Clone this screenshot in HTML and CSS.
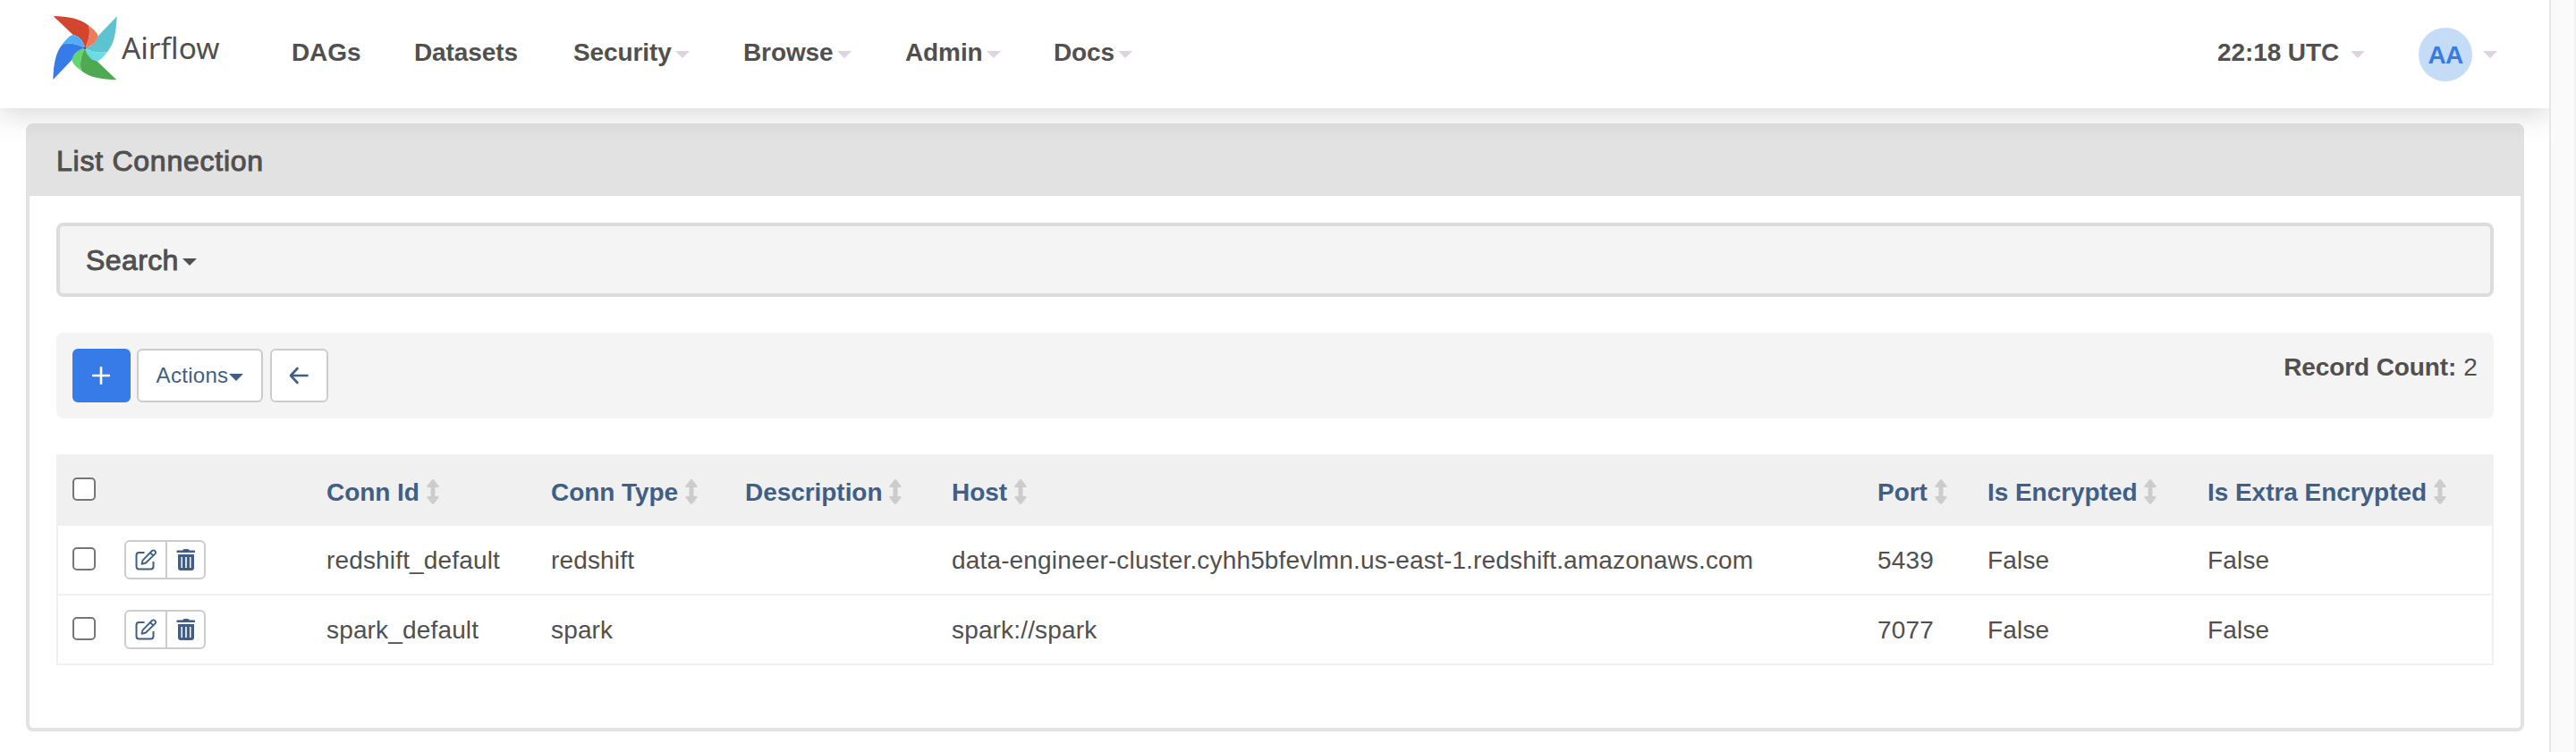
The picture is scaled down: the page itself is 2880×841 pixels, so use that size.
FILE: index.html
```
<!DOCTYPE html>
<html lang="en">
<head>
<meta charset="utf-8">
<title>List Connection - Airflow</title>
<link rel="stylesheet" href="styles.css">
</head>
<body>
<svg class="defs" aria-hidden="true">
  <symbol id="edit" viewBox="0 0 24 24"><path d="M10.500 4H4.500A3 3 0 0 0 1.500 7V19.500A3 3 0 0 0 4.500 22.500H17.500A3 3 0 0 0 20.500 19.500V14" fill="none" stroke="currentColor" stroke-width="2"/><path d="M7.500 16.800L8.600 12.600L19 2Q20.500.700 22.200 2.100Q23.800 3.800 22.400 5.400L12 15.500ZM17 4.200L20.300 7.500" fill="none" stroke="currentColor" stroke-width="1.900" stroke-linejoin="round"/></symbol>
  <symbol id="trash" viewBox="0 0 22 24"><path fill="currentColor" fill-rule="evenodd" d="M1 1.500H7Q8 0 9 0H13Q14 0 15 1.500H20.500Q21 1.500 21 2.500V4H.500V2.500Q.500 1.500 1 1.500ZM2 6H20V21Q20 24 17 24H5Q2 24 2 21ZM5.500 9V21H7V9ZM10.200 9V21H11.800V9ZM15 9V21H16.500V9Z"/></symbol>
  <symbol id="sort" viewBox="0 0 14 28"><path fill="currentColor" d="M7 0Q7.700 0 8.300.700L13.500 7.500Q14 9 12.500 9H9.500V19H12.500Q14 19 13.500 20.500L8.300 27.300Q7 28.700 5.700 27.300L.500 20.500Q0 19 1.500 19H4.500V9H1.500Q0 9 .500 7.500L5.700.700Q6.300 0 7 0Z"/></symbol>
</svg>
<div class="page">
  <header class="navbar">
    <svg class="logo" viewBox="0 0 720 360" role="img" aria-label="Airflow">
      <g><path fill="#d2462f" d="M59 54C110 56 150 62 178 86C183 115 178 137 165 161C160 140 148 122 125 117Z"/><path fill="#ef7b5f" d="M178 86C194 97 209 112 209 122C204 144 186 156 165 161C178 137 183 115 178 86Z"/></g>
      <g transform="rotate(90 165 161)"><path fill="#5cc4d1" d="M59 54C110 56 150 62 178 86C183 115 178 137 165 161C160 140 148 122 125 117Z"/><path fill="#68dde9" d="M178 86C194 97 209 112 209 122C204 144 186 156 165 161C178 137 183 115 178 86Z"/></g>
      <g transform="rotate(180 165 161)"><path fill="#4ea952" d="M59 54C110 56 150 62 178 86C183 115 178 137 165 161C160 140 148 122 125 117Z"/><path fill="#62d56c" d="M178 86C194 97 209 112 209 122C204 144 186 156 165 161C178 137 183 115 178 86Z"/></g>
      <g transform="rotate(270 165 161)"><path fill="#377be8" d="M59 54C110 56 150 62 178 86C183 115 178 137 165 161C160 140 148 122 125 117Z"/><path fill="#51aefa" d="M178 86C194 97 209 112 209 122C204 144 186 156 165 161C178 137 183 115 178 86Z"/></g>
      <circle cx="165" cy="161" r="4" fill="#51504f"/>
      <text class="wordmark" x="288" y="198" textLength="328" lengthAdjust="spacingAndGlyphs">Airflow</text>
    </svg>
    <nav class="menu">
      <a class="item dags">DAGs</a>
      <a class="item datasets">Datasets</a>
      <a class="item security">Security<i class="caret"></i></a>
      <a class="item browse">Browse<i class="caret"></i></a>
      <a class="item admin">Admin<i class="caret"></i></a>
      <a class="item docs">Docs<i class="caret"></i></a>
    </nav>
    <div class="user-menu">
      <a class="item clock">22:18 UTC<i class="caret"></i></a>
      <a class="item account"><span class="avatar">AA</span><i class="caret"></i></a>
    </div>
  </header>
  <main class="panel">
    <h1 class="panel-heading">List Connection</h1>
    <div class="panel-body">
      <div class="search">Search<i class="caret"></i></div>
      <div class="toolbar">
        <button class="btn primary"><svg width="20" height="20" viewBox="0 0 20 20"><path d="M10 1V19M1 10H19" stroke="#fff" stroke-width="2.600" stroke-linecap="round"/></svg></button>
        <button class="btn actions">Actions<i class="caret"></i></button>
        <button class="btn back"><svg width="22" height="20" viewBox="0 0 22 20"><path d="M9.500 2L2 10L9.500 18M2.500 10H20.500" fill="none" stroke="currentColor" stroke-width="2.600" stroke-linecap="round" stroke-linejoin="round"/></svg></button>
        <div class="count"><b>Record Count:</b> 2</div>
      </div>
      <table class="list">
        <colgroup><col class="c-check"><col class="c-tools"><col class="c-id"><col class="c-type"><col class="c-desc"><col class="c-host"><col class="c-port"><col class="c-enc"><col class="c-extra"></colgroup>
        <thead><tr>
          <th><span class="check"></span></th><th></th>
          <th>Conn Id<svg class="sort"><use href="#sort"/></svg></th>
          <th>Conn Type<svg class="sort"><use href="#sort"/></svg></th>
          <th>Description<svg class="sort"><use href="#sort"/></svg></th>
          <th>Host<svg class="sort"><use href="#sort"/></svg></th>
          <th>Port<svg class="sort"><use href="#sort"/></svg></th>
          <th>Is Encrypted<svg class="sort"><use href="#sort"/></svg></th>
          <th>Is Extra Encrypted<svg class="sort"><use href="#sort"/></svg></th>
        </tr></thead>
        <tbody>
          <tr>
            <td><span class="check"></span></td>
            <td><div class="tools"><a class="tool"><svg class="edit"><use href="#edit"/></svg></a><a class="tool"><svg class="trash"><use href="#trash"/></svg></a></div></td>
            <td>redshift_default</td><td>redshift</td><td></td><td>data-engineer-cluster.cyhh5bfevlmn.us-east-1.redshift.amazonaws.com</td><td>5439</td><td>False</td><td>False</td>
          </tr>
          <tr>
            <td><span class="check"></span></td>
            <td><div class="tools"><a class="tool"><svg class="edit"><use href="#edit"/></svg></a><a class="tool"><svg class="trash"><use href="#trash"/></svg></a></div></td>
            <td>spark_default</td><td>spark</td><td></td><td>spark://spark</td><td>7077</td><td>False</td><td>False</td>
          </tr>
        </tbody>
      </table>
    </div>
  </main>
</div>
<div class="scrollbar"></div>
</body>
</html>
```
FILE: styles.css
```
* { box-sizing: border-box; }
body {
  margin: 0;
  height: 841px;
  display: flex;
  overflow: hidden;
  background: #fff;
  color: #51504f;
  font: 28px/40px "Liberation Sans", Arial, sans-serif;
  letter-spacing: .16px;
}
.defs { position: absolute; width: 0; height: 0; }
.page { width: 2850px; height: 841px; overflow: hidden; }
.scrollbar {
  width: 30px;
  background: #fafafa;
  border-left: 2px solid #e7e7e7;
  border-right: 2px solid #f0f0f0;
}

.navbar {
  position: relative;
  z-index: 1;
  display: flex;
  height: 121px;
  padding-left: 40px;
  background: #fff;
  box-shadow: 0 8px 28px rgba(81, 80, 79, .21);
}
.logo { width: 240px; height: 120px; flex: none; }
.wordmark { font: 100px "Noto Sans", sans-serif; fill: #51504f; letter-spacing: 0; }
.menu { display: flex; padding-left: 46px; }
.item {
  display: flex;
  align-items: center;
  height: 118px;
  font-weight: 700;
  letter-spacing: -.1px;
  white-space: nowrap;
}
.dags { width: 137px; }
.datasets { width: 178px; }
.security { width: 190px; }
.browse { width: 181px; }
.admin { width: 166px; }
.user-menu { display: flex; margin-left: auto; }
.clock { width: 225px; }
.clock .caret { margin-left: 13px; }
.account { width: 146px; }
.account .caret { margin-left: 12px; }
.avatar {
  width: 60px;
  height: 60px;
  margin-top: 4px;
  border-radius: 50%;
  background: #c5dcf7;
  color: #377be8;
  line-height: 62px;
  letter-spacing: -.8px;
  text-align: center;
}
.caret {
  margin: 4px 0 0 4px;
  border: 8px solid transparent;
  border-top-color: currentColor;
  border-bottom: 0;
}
.navbar .caret { border-top-color: #ded3e2; }

.panel {
  width: 2793px;
  height: 680px;
  margin: 17px 0 0 29px;
  border: 4px solid #e2e2e2;
  border-radius: 8px;
}
.panel-heading {
  height: 77px;
  margin: 0;
  padding-left: 30px;
  background: #e2e2e2;
  font-size: 32px;
  font-weight: 400;
  line-height: 76px;
  letter-spacing: .75px;
  -webkit-text-stroke: 1px;
}
.panel-body { padding: 30px; }
.search {
  display: flex;
  align-items: center;
  height: 83px;
  padding-left: 29px;
  border: 4px solid #dcdcdc;
  border-radius: 8px;
  background: #f4f4f4;
  font-size: 32px;
  letter-spacing: .4px;
  -webkit-text-stroke: 1px;
}
.search .caret { margin-left: 4px; }
.toolbar {
  display: flex;
  height: 96px;
  margin: 40px 0;
  padding: 18px;
  border-radius: 8px;
  background: #f4f4f4;
}
.btn {
  display: flex;
  align-items: center;
  justify-content: center;
  height: 60px;
  padding: 0;
  border: 2px solid #ccc;
  border-radius: 6px;
  background: #fff;
  color: #3f5f86;
  font: 24px "Liberation Sans", Arial, sans-serif;
  letter-spacing: .3px;
}
.primary { width: 65px; border-color: #377be8; background: #377be8; }
.primary svg, .back svg { margin-right: 2px; }
.actions { width: 141px; margin: 0 8px 0 7px; }
.actions .caret { margin: 4px 0 0 1px; }
.back { width: 65px; }
.count { margin-left: auto; padding-top: 1px; }
.count b { letter-spacing: -.1px; }

.list {
  width: 2725px;
  table-layout: fixed;
  border-collapse: separate;
  border-spacing: 0;
  box-shadow: inset 0 0 0 2px #f0f0f0;
}
.c-check { width: 58px; }
.c-tools { width: 226px; }
.c-id { width: 251px; }
.c-type { width: 217px; }
.c-desc { width: 231px; }
.c-host { width: 1035px; }
.c-port { width: 123px; }
.c-enc { width: 246px; }
.c-extra { width: 338px; }
th, td { padding: 0 0 0 18px; text-align: left; white-space: nowrap; }
td { padding-top: 1px; }
th { height: 80px; padding-top: 5px; background: #f0f0f0; color: #3f5f86; letter-spacing: -.05px; }
td { height: 78px; border-bottom: 2px solid #f0f0f0; }
.check {
  display: block;
  width: 26px;
  height: 26px;
  border: 2px solid #767676;
  border-radius: 5px;
  background: #fff;
}
td .check { margin-bottom: 3px; }
th .check { margin-bottom: 7px; }
.sort { width: 14px; height: 28px; margin-left: 8px; vertical-align: -4px; color: #ccc; }
.tools {
  display: flex;
  width: 91px;
  height: 44px;
  margin-bottom: 1px;
  border: 2px solid #ccc;
  border-radius: 6px;
  background: #fff;
  color: #3f5f86;
}
.tool { display: flex; width: 41px; align-items: center; justify-content: center; }
.tool:first-child { width: 46px; border-right: 2px solid #ccc; }
.edit { width: 24px; height: 24px; flex: none; }
.trash { width: 22px; height: 24px; flex: none; }
```
